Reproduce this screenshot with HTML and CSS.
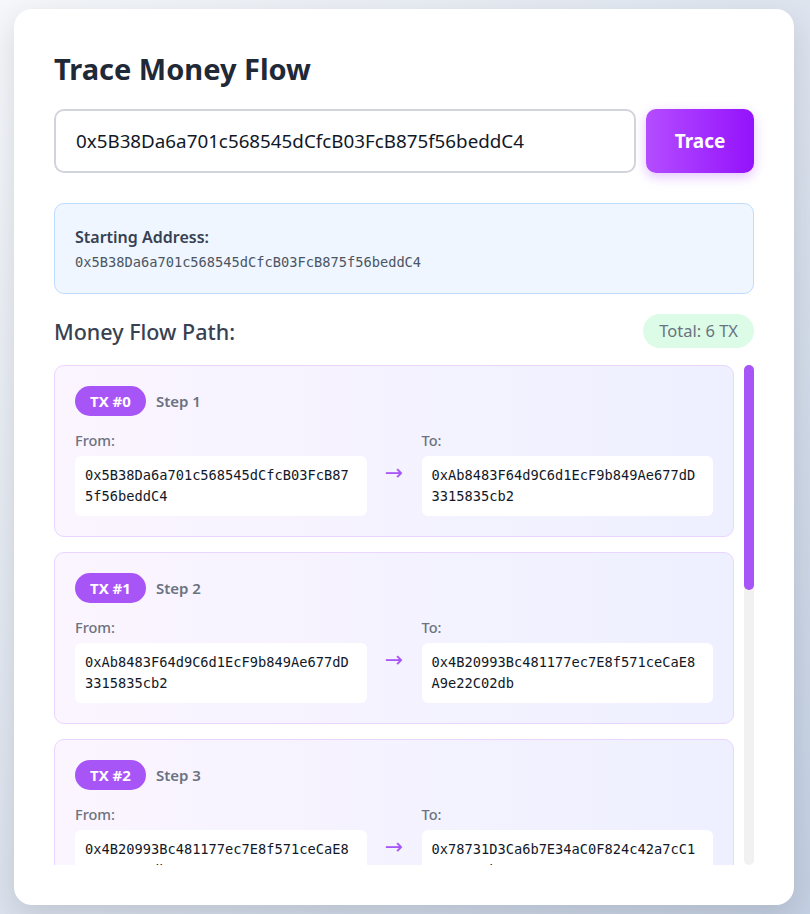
FILE: index.html
```html
<!DOCTYPE html>
<html lang="en">
<head>
<meta charset="utf-8">
<title>Trace Money Flow</title>
<link rel="stylesheet" href="styles.css">
</head>
<body>
<main class="card">
  <h1 class="title">Trace Money Flow</h1>
  <div class="search">
    <input class="search-input" type="text" value="0x5B38Da6a701c568545dCfcB03FcB875f56beddC4">
    <button class="search-btn">Trace</button>
  </div>
  <div class="start">
    <div class="start-label">Starting Address:</div>
    <div class="start-addr">0x5B38Da6a701c568545dCfcB03FcB875f56beddC4</div>
  </div>
  <div class="path-head">
    <h2 class="path-title">Money Flow Path:</h2>
    <span class="total">Total: 6 TX</span>
  </div>
  <div class="list-wrap">
    <div class="list">
      <div class="tx">
        <div class="tx-head"><span class="badge">TX #0</span><span class="step">Step 1</span></div>
        <div class="tx-body">
          <div class="side"><div class="lbl">From:</div><div class="addr">0x5B38Da6a701c568545dCfcB03FcB875f56beddC4</div></div>
          <div class="arrow">→</div>
          <div class="side"><div class="lbl">To:</div><div class="addr">0xAb8483F64d9C6d1EcF9b849Ae677dD3315835cb2</div></div>
        </div>
      </div>
      <div class="tx">
        <div class="tx-head"><span class="badge">TX #1</span><span class="step">Step 2</span></div>
        <div class="tx-body">
          <div class="side"><div class="lbl">From:</div><div class="addr">0xAb8483F64d9C6d1EcF9b849Ae677dD3315835cb2</div></div>
          <div class="arrow">→</div>
          <div class="side"><div class="lbl">To:</div><div class="addr">0x4B20993Bc481177ec7E8f571ceCaE8A9e22C02db</div></div>
        </div>
      </div>
      <div class="tx">
        <div class="tx-head"><span class="badge">TX #2</span><span class="step">Step 3</span></div>
        <div class="tx-body">
          <div class="side"><div class="lbl">From:</div><div class="addr">0x4B20993Bc481177ec7E8f571ceCaE8A9e22C02db</div></div>
          <div class="arrow">→</div>
          <div class="side"><div class="lbl">To:</div><div class="addr">0x78731D3Ca6b7E34aC0F824c42a7cC18A495cabaB</div></div>
        </div>
      </div>
      <div class="tx">
        <div class="tx-head"><span class="badge">TX #3</span><span class="step">Step 4</span></div>
        <div class="tx-body">
          <div class="side"><div class="lbl">From:</div><div class="addr">0x78731D3Ca6b7E34aC0F824c42a7cC18A495cabaB</div></div>
          <div class="arrow">→</div>
          <div class="side"><div class="lbl">To:</div><div class="addr">0x617F2E2fD72FD9D5503197092aC168c91465E7f2</div></div>
        </div>
      </div>
      <div class="tx">
        <div class="tx-head"><span class="badge">TX #4</span><span class="step">Step 5</span></div>
        <div class="tx-body">
          <div class="side"><div class="lbl">From:</div><div class="addr">0x617F2E2fD72FD9D5503197092aC168c91465E7f2</div></div>
          <div class="arrow">→</div>
          <div class="side"><div class="lbl">To:</div><div class="addr">0x17F6AD8Ef982297579C203069C1DbfFE4348c372</div></div>
        </div>
      </div>
      <div class="tx">
        <div class="tx-head"><span class="badge">TX #5</span><span class="step">Step 6</span></div>
        <div class="tx-body">
          <div class="side"><div class="lbl">From:</div><div class="addr">0x17F6AD8Ef982297579C203069C1DbfFE4348c372</div></div>
          <div class="arrow">→</div>
          <div class="side"><div class="lbl">To:</div><div class="addr">0x5c6B0f7Bf3E7ce046039Bd8FABdfD3f9F5021678</div></div>
        </div>
      </div>
    </div>
    <div class="scroll-track"><div class="scroll-thumb"></div></div>
  </div>
</main>
</body>
</html>
```

FILE: styles.css
```css
* { box-sizing: border-box; }
html, body { height: 100%; }
body {
  margin: 0;
  padding: 9px 16px 9px 14px;
  background: linear-gradient(135deg, #f5f7fa 0%, #c3cfe2 100%);
  font-family: "Noto Sans", "Open Sans", sans-serif;
  color: #1f2937;
}
.card {
  height: 896px;
  background: #fff;
  border-radius: 18px;
  box-shadow: 0 10px 30px rgba(0, 0, 0, 0.12);
  padding: 40px;
  display: flex;
  flex-direction: column;
}
.title {
  margin: 0 0 20px;
  font-size: 29px;
  line-height: 40px;
  font-weight: 700;
  color: #1f2937;
}
.search {
  display: flex;
  gap: 10px;
  height: 64px;
  margin-bottom: 30px;
}
.search-input {
  flex: 1;
  min-width: 0;
  border: 2px solid #d1d5db;
  border-radius: 10px;
  padding: 0 20px;
  font-family: "Noto Sans", sans-serif;
  font-size: 18.8px;
  color: #111827;
  outline: none;
}
.search-btn {
  width: 108px;
  border: none;
  border-radius: 10px;
  background: linear-gradient(90deg, #b44dff 0%, #9412fc 100%);
  color: #fff;
  font-family: "Noto Sans", sans-serif;
  font-size: 19px;
  font-weight: 700;
  box-shadow: 0 4px 12px rgba(148, 18, 252, 0.25);
}
.start {
  background: #eff6ff;
  border: 1px solid #bfdbfe;
  border-radius: 10px;
  padding: 21px 20px 21px;
  margin-bottom: 20px;
}
.start-label {
  font-size: 16px;
  line-height: 24px;
  font-weight: 600;
  color: #374151;
  margin-bottom: 3px;
}
.start-addr {
  font-family: "DejaVu Sans Mono", monospace;
  font-size: 13.7px;
  line-height: 20px;
  color: #4b5563;
}
.path-head {
  display: flex;
  align-items: center;
  justify-content: space-between;
  margin-bottom: 17px;
}
.path-title {
  margin: 0;
  font-size: 21.5px;
  font-weight: 500;
  color: #374151;
}
.total {
  background: #dcfce7;
  color: #6b7280;
  font-size: 16.5px;
  line-height: 34px;
  padding: 0 16px;
  border-radius: 17px;
}
.list-wrap {
  flex: 1;
  min-height: 0;
  position: relative;
  display: flex;
}
.list {
  flex: 1;
  min-height: 0;
  overflow: hidden;
  padding-right: 20px;
  display: flex;
  flex-direction: column;
  gap: 15px;
}
.scroll-track {
  position: absolute;
  top: 0;
  right: 0;
  bottom: 0;
  width: 10px;
  background: #f1f1f1;
  border-radius: 5px;
}
.scroll-thumb {
  height: 225px;
  background: #a855f7;
  border-radius: 5px;
}
.tx {
  flex: none;
  border: 1px solid #e9d5ff;
  border-radius: 10px;
  background: linear-gradient(90deg, #fbf5ff 0%, #eef0ff 100%);
  padding: 20px;
}
.tx-head {
  display: flex;
  align-items: center;
  gap: 10px;
  margin-bottom: 14px;
}
.badge {
  background: #a855f7;
  color: #fff;
  font-weight: 700;
  font-size: 15px;
  line-height: 30px;
  padding: 0 15px;
  border-radius: 15px;
}
.step {
  color: #6b7280;
  font-size: 15px;
  font-weight: 600;
}
.tx-body {
  display: grid;
  grid-template-columns: 1fr auto 1fr;
  gap: 17px;
  align-items: center;
}
.lbl {
  color: #6b7280;
  font-size: 14.5px;
  font-weight: 500;
  line-height: 20px;
  margin-bottom: 6px;
}
.addr {
  background: #fff;
  border-radius: 6px;
  padding: 9px 10px;
  font-family: "DejaVu Sans Mono", monospace;
  font-size: 13.7px;
  line-height: 21px;
  color: #111827;
  word-break: break-all;
}
.arrow {
  color: #a855f7;
  font-family: "DejaVu Sans", sans-serif;
  font-size: 22px;
  line-height: 24px;
  width: 21px;
  display: flex;
  justify-content: center;
}
```
